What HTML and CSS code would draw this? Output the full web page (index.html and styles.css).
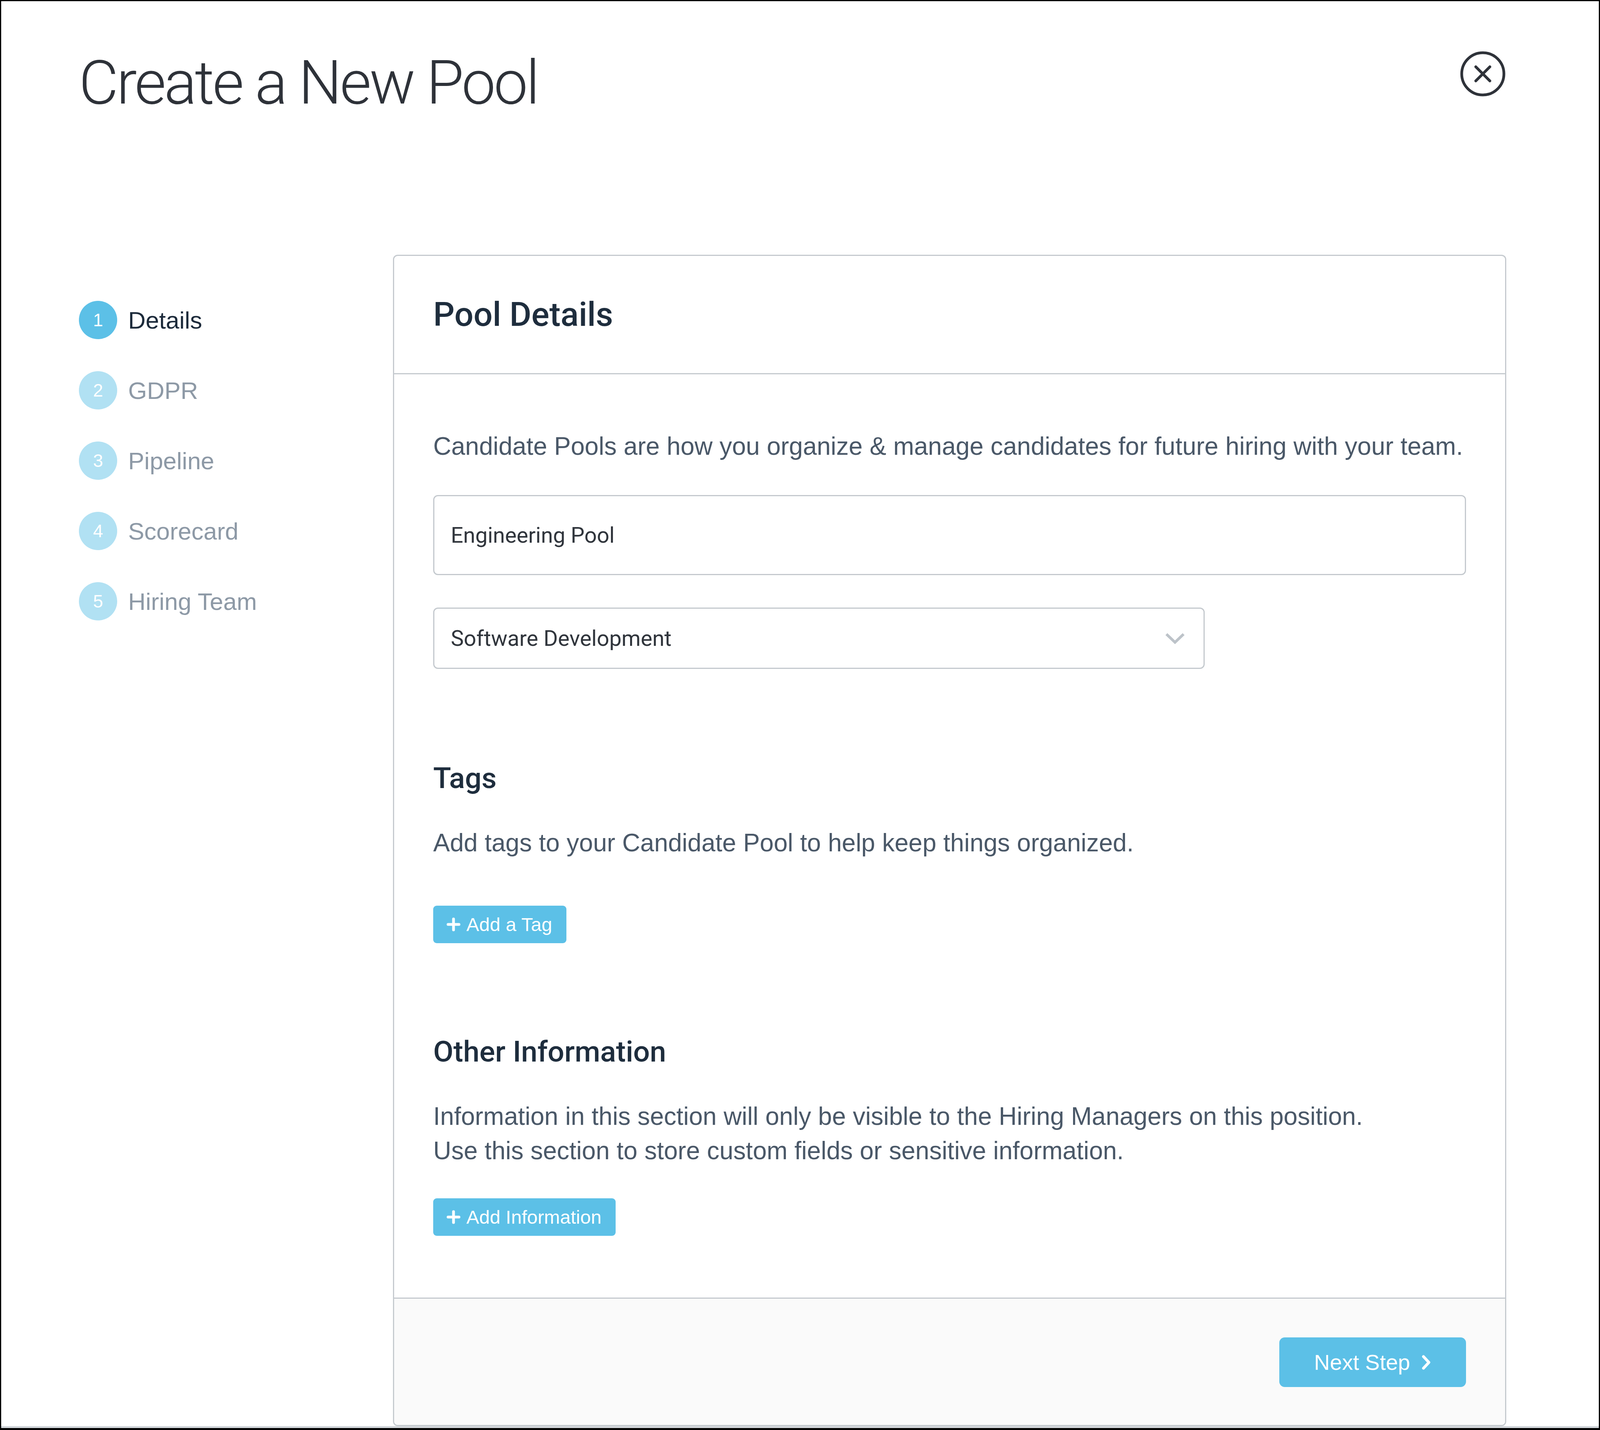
FILE: index.html
```html
<!DOCTYPE html>
<html lang="en">
<head>
    <meta charset="UTF-8">
    <meta name="viewport" content="width=device-width, initial-scale=1.0">
    <title>Create a New Pool</title>
    <link rel="stylesheet" href="styles.css">
</head>
<body>
    <div class="frame">
        <div class="page">
            <!-- Cabecera con titulo y boton de cerrar -->
            <header class="topbar">
                <h1>Create a New Pool</h1>
                <button class="close" aria-label="Close">
                    <svg width="120" height="120" viewBox="0 0 120 120" fill="none" stroke="#2e3239" stroke-width="7" stroke-linecap="round">
                        <circle cx="60" cy="60" r="54"/>
                        <path d="M42 42 L78 78 M78 42 L42 78"/>
                    </svg>
                </button>
            </header>

            <div class="main">
                <!-- Pasos del asistente -->
                <ol class="steps">
                    <li class="step active"><span class="num">1</span><span class="label">Details</span></li>
                    <li class="step"><span class="num">2</span><span class="label">GDPR</span></li>
                    <li class="step"><span class="num">3</span><span class="label">Pipeline</span></li>
                    <li class="step"><span class="num">4</span><span class="label">Scorecard</span></li>
                    <li class="step"><span class="num">5</span><span class="label">Hiring Team</span></li>
                </ol>

                <div class="card">
                    <div class="card-header">
                        <h2>Pool Details</h2>
                    </div>
                    <div class="card-body">
                        <p class="intro">Candidate Pools are how you organize &amp; manage candidates for future hiring with your team.</p>
                        <div class="field">Engineering Pool</div>
                        <div class="select">
                            <span>Software Development</span>
                            <svg width="50" height="30" viewBox="0 0 50 30" fill="none" stroke="#bdc3c9" stroke-width="7">
                                <polyline points="3,4 25,25 47,4"/>
                            </svg>
                        </div>

                        <section class="block tags">
                            <h3>Tags</h3>
                            <p>Add tags to your Candidate Pool to help keep things organized.</p>
                            <button class="btn-small">
                                <svg width="36" height="36" viewBox="0 0 36 36" stroke="#fff" stroke-width="7" stroke-linecap="round">
                                    <path d="M18 4 V32 M4 18 H32"/>
                                </svg>
                                Add a Tag
                            </button>
                        </section>

                        <section class="block other">
                            <h3>Other Information</h3>
                            <p>Information in this section will only be visible to the Hiring Managers on this position.<br>Use this section to store custom fields or sensitive information.</p>
                            <button class="btn-small">
                                <svg width="36" height="36" viewBox="0 0 36 36" stroke="#fff" stroke-width="7" stroke-linecap="round">
                                    <path d="M18 4 V32 M4 18 H32"/>
                                </svg>
                                Add Information
                            </button>
                        </section>
                    </div>
                    <div class="card-footer">
                        <button class="btn-next">
                            Next Step
                            <svg width="24" height="40" viewBox="0 0 24 40" fill="none" stroke="#fff" stroke-width="7" stroke-linecap="round" stroke-linejoin="round">
                                <path d="M5 5 L19 20 L5 35"/>
                            </svg>
                        </button>
                    </div>
                </div>
            </div>
        </div>
    </div>
</body>
</html>
```

FILE: styles.css
```css
body {
    margin: 0;
    background: #fff;
    font-family: "Liberation Sans", Arial, sans-serif;
}
.frame {
    height: 3660px;
    box-sizing: border-box;
    border: 3px solid #000;
    border-bottom-width: 5px;
    background: #fff;
    overflow: hidden;
}
.page {
    height: 100%;
    box-sizing: border-box;
    display: flex;
    flex-direction: column;
    padding: 0 237px 0 199px;
    border-bottom: 5px solid #d3d7db;
}

/* cabecera */
.topbar {
    display: flex;
    justify-content: space-between;
    align-items: flex-start;
}
.topbar h1 {
    margin: 113px 0 0;
    font-family: Roboto, sans-serif;
    font-weight: 300;
    font-size: 156px;
    line-height: 192px;
    letter-spacing: -5px;
    color: #2e3239;
}
.close {
    margin: 126px 0 0;
    padding: 0;
    border: none;
    background: none;
    width: 120px;
    height: 120px;
}
.close svg {
    display: block;
}

.main {
    flex: 1;
    display: flex;
    margin-top: 344px;
    min-width: 0;
}

/* pasos */
.steps {
    list-style: none;
    margin: 0;
    padding: 118px 0 0;
    width: 804px;
    flex-shrink: 0;
    display: flex;
    flex-direction: column;
    gap: 82px;
}
.step {
    display: flex;
    align-items: center;
    gap: 28px;
    height: 98px;
}
.num {
    width: 98px;
    height: 98px;
    border-radius: 50%;
    background: #b1e1f3;
    color: #fff;
    font-size: 46px;
    display: flex;
    align-items: center;
    justify-content: center;
}
.label {
    font-size: 62px;
    color: #8d99a6;
}
.step.active .num {
    background: #5cc0e7;
}
.step.active .label {
    color: #1c2a3a;
}

/* tarjeta */
.card {
    flex: 1;
    min-width: 0;
    display: flex;
    flex-direction: column;
    border: 3px solid #c5cacf;
    border-radius: 12px;
    overflow: hidden;
}
.card-header {
    height: 300px;
    display: flex;
    align-items: center;
    padding: 0 100px;
    border-bottom: 3px solid #c5cacf;
}
.card-header h2 {
    margin: 0;
    font-family: Roboto, sans-serif;
    font-weight: 500;
    font-size: 86px;
    line-height: 100px;
    color: #1e2d3d;
}
.card-body {
    padding: 140px 100px 158px;
}
.card-body p {
    margin: 0;
    font-size: 64px;
    line-height: 88px;
    color: #4a5868;
}
.field {
    height: 205px;
    box-sizing: border-box;
    margin-top: 81px;
    padding: 0 42px;
    border: 3px solid #c4c9ce;
    border-radius: 12px;
    display: flex;
    align-items: center;
    font-family: Roboto, sans-serif;
    font-size: 56px;
    color: #30353c;
}
.select {
    width: 1975px;
    max-width: 100%;
    height: 157px;
    box-sizing: border-box;
    margin-top: 83px;
    padding: 0 48px 0 42px;
    border: 3px solid #c4c9ce;
    border-radius: 12px;
    display: flex;
    align-items: center;
    justify-content: space-between;
    font-family: Roboto, sans-serif;
    font-size: 56px;
    color: #30353c;
}
.block h3 {
    margin: 0;
    font-family: Roboto, sans-serif;
    font-weight: 500;
    font-size: 75px;
    line-height: 100px;
    color: #1e2d3d;
}
.tags h3 {
    margin-top: 229px;
}
.other h3 {
    margin-top: 227px;
}
.block p {
    margin-top: 72px;
}
.btn-small {
    display: flex;
    align-items: center;
    gap: 15px;
    height: 96px;
    padding: 0 36px 0 34px;
    border: none;
    border-radius: 9px;
    background: #5cc0e7;
    color: #fff;
    font-family: "Liberation Sans", Arial, sans-serif;
    font-size: 49px;
}
.tags .btn-small {
    margin-top: 117px;
}
.other .btn-small {
    margin-top: 78px;
}

.card-footer {
    flex: 1;
    background: #fafafa;
    border-top: 3px solid #c5cacf;
    display: flex;
    justify-content: flex-end;
    align-items: flex-start;
    padding: 99px 100px 0;
}
.btn-next {
    display: flex;
    align-items: center;
    gap: 29px;
    height: 127px;
    padding: 0 90px 0 89px;
    border: none;
    border-radius: 14px;
    background: #5cc0e7;
    color: #fff;
    font-family: "Liberation Sans", Arial, sans-serif;
    font-size: 56px;
}
```
